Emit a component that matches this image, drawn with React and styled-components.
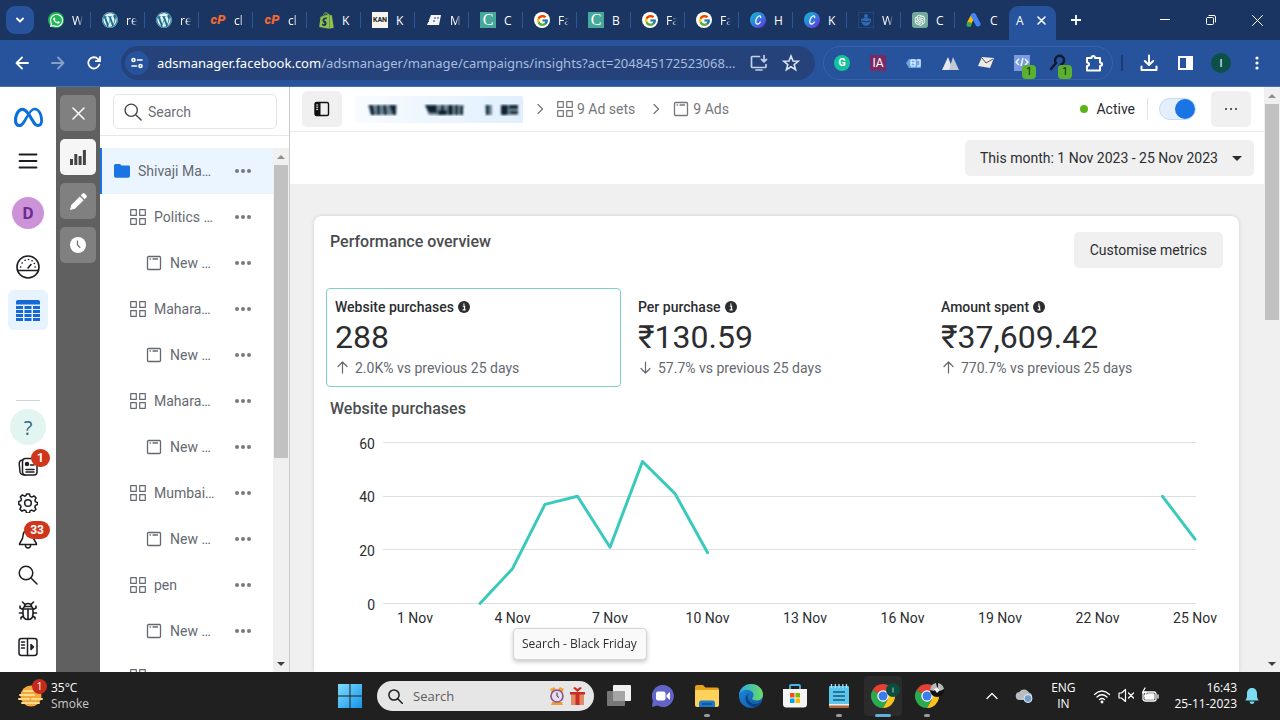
import React, { useState } from "react";
import styled, { createGlobalStyle } from "styled-components";
import { FaWhatsapp, FaWordpress, FaShopify, FaMeta } from "react-icons/fa6";
import { FcGoogle } from "react-icons/fc";
import { AiOutlineOpenAI } from "react-icons/ai";

const GlobalStyle = createGlobalStyle`
  * {
    box-sizing: border-box;
  }
  body {
    margin: 0;
    overflow: hidden;
    font-family: Roboto, "Liberation Sans", sans-serif;
    font-size: 14px;
    color: #2b2d30;
  }
  button, input, select {
    font: inherit;
    color: inherit;
    margin: 0;
    padding: 0;
    border: 0;
    background: none;
  }
  svg {
    display: block;
    flex: none;
  }
`;

const Screen = styled.div`
  display: flex;
  flex-direction: column;
  height: 100vh;
`;

const uiFont = `"Open Sans", "Noto Sans", sans-serif`;

/* ---------- browser ---------- */

const TabStrip = styled.div`
  display: flex;
  flex: none;
  align-items: center;
  height: 40px;
  padding-left: 6px;
  background: #1b3562;
  color: #fff;
  font-family: ${uiFont};
  font-size: 12px;
`;

const TabSearch = styled.button`
  display: grid;
  place-items: center;
  width: 28px;
  height: 28px;
  margin-right: 3px;
  border-radius: 9px;
  background: #27529c;
`;

const Tab = styled.button`
  display: flex;
  align-items: center;
  width: 54px;
  height: 16px;
  padding-left: 11px;
  border-right: 1px solid ${(props) => (props.$last ? "transparent" : "#2d559c")};
`;

const TabTitle = styled.span`
  margin-left: 8px;
  white-space: nowrap;
  mask-image: ${(props) => (props.$fade ? "linear-gradient(90deg, #000 6px, transparent 11px)" : "none")};
`;

const ActiveTab = styled.div`
  display: flex;
  align-items: center;
  align-self: flex-end;
  justify-content: space-between;
  width: 47px;
  height: 34px;
  padding: 0 10px 6px 7px;
  border-radius: 9px 9px 0 0;
  background: #27529c;
`;

const NewTab = styled.button`
  display: grid;
  place-items: center;
  width: 40px;
  height: 28px;
`;

const WindowButtons = styled.div`
  display: flex;
  margin-left: auto;
`;

const WindowButton = styled.button`
  display: grid;
  place-items: center;
  width: 46px;
  height: 32px;
`;

const Favicon = styled.span`
  display: grid;
  flex: none;
  place-items: center;
  width: 16px;
  height: 16px;
  border-radius: ${(props) => props.$radius || 0}px;
  background: ${(props) => props.$bg || "none"};
  color: ${(props) => props.$color || "#fff"};
  font: ${(props) => props.$font || "bold 9px Roboto, sans-serif"};
  line-height: 16px;
`;

const Toolbar = styled.div`
  display: flex;
  flex: none;
  align-items: center;
  height: 47px;
  padding: 0 5px 0 4px;
  background: #27529c;
  border-bottom: 1px solid #4a6db0;
  color: #fff;
`;

const ToolButton = styled.button`
  display: grid;
  flex: none;
  place-items: center;
  width: 36px;
  height: 34px;
  opacity: ${(props) => (props.$dim ? 0.45 : 1)};
`;

const Omnibox = styled.div`
  display: flex;
  flex: 1;
  align-items: center;
  min-width: 0;
  height: 34px;
  margin: 0 8px 0 9px;
  padding: 0 8px 0 4px;
  border-radius: 17px;
  background: #25437a;
`;

const SiteInfo = styled.button`
  display: grid;
  flex: none;
  place-items: center;
  width: 24px;
  height: 24px;
  margin-right: 8px;
  border-radius: 50%;
  background: #27529c;
`;

const Address = styled.a`
  flex: 1;
  min-width: 0;
  overflow: hidden;
  color: #a9bcdf;
  font-family: "Noto Sans", sans-serif;
  font-size: 13px;
  text-decoration: none;
  text-overflow: ellipsis;
  white-space: nowrap;
`;

const Domain = styled.span`
  color: #fff;
`;

const OmniButton = styled.button`
  display: grid;
  flex: none;
  place-items: center;
  width: 32px;
  height: 28px;
`;

const Extensions = styled.div`
  display: flex;
  flex: none;
  align-items: center;
  height: 34px;
  margin-right: 8px;
  border: 1px solid #3762a9;
  border-radius: 17px;
`;

const Extension = styled(ToolButton)`
  position: relative;
`;

const ExtensionCount = styled.span`
  position: absolute;
  right: 4px;
  bottom: 1px;
  width: 14px;
  height: 14px;
  border-radius: 4px;
  background: #5cb030;
  color: #10240a;
  font-size: 10px;
  line-height: 14px;
`;

const ToolbarDivider = styled.div`
  flex: none;
  width: 2px;
  height: 16px;
  margin-right: 8px;
  background: #1d3c75;
`;

const ProfileDot = styled.span`
  display: grid;
  place-items: center;
  width: 20px;
  height: 20px;
  border-radius: 50%;
  background: #0c5149;
  font-size: 11px;
`;

/* ---------- page ---------- */

const Page = styled.div`
  display: flex;
  flex: 1;
  min-height: 0;
  background: #fff;
`;

const Rail = styled.nav`
  display: flex;
  flex: none;
  flex-direction: column;
  align-items: center;
  width: 56px;
  padding: 8px 0 7px;
  color: #1c1e21;
`;

const RailItem = styled.button`
  position: relative;
  display: grid;
  flex: none;
  place-items: center;
  width: 40px;
  height: ${(props) => props.$height || 36}px;
  border-radius: 6px;
  background: ${(props) => (props.$active ? "#e7f3ff" : "none")};
`;

const Avatar = styled.span`
  display: grid;
  place-items: center;
  width: 32px;
  height: 32px;
  border-radius: 50%;
  background: #cd93d8;
  color: #6d2c8f;
  font-size: 17px;
  font-weight: 700;
`;

const RailDivider = styled.div`
  width: 24px;
  height: 1px;
  margin: auto 0 8px;
  background: #d0d3d7;
`;

const HelpItem = styled(RailItem)`
  width: 36px;
  margin-bottom: 4px;
  border-radius: 50%;
  background: #e2f5f0;
  color: #2c6a7c;
  font-family: ${uiFont};
  font-size: 20px;
`;

const Badge = styled.span`
  position: absolute;
  top: 0;
  right: -2px;
  min-width: 18px;
  height: 18px;
  padding: 0 6px;
  border-radius: 9px;
  background: #d0361b;
  color: #fff;
  font-size: 12px;
  font-weight: 700;
  line-height: 18px;
`;

const ModeRail = styled.nav`
  display: flex;
  flex: none;
  flex-direction: column;
  align-items: center;
  gap: 8px;
  width: 44px;
  padding-top: 8px;
  background: #606060;
`;

const ModeButton = styled.button`
  display: grid;
  place-items: center;
  width: 36px;
  height: 36px;
  border-radius: 5px;
  background: ${(props) => (props.$active ? "#f6f6f6" : "#808080")};
  color: ${(props) => (props.$active ? "#444" : "#fff")};
`;

const TreePanel = styled.aside`
  display: flex;
  flex: none;
  flex-direction: column;
  width: 190px;
  border-right: 1px solid #c9cbce;
`;

const TreeHeader = styled.div`
  flex: none;
  padding: 7px 12px 6px 13px;
  border-bottom: 1px solid #e6e7e9;
`;

const SearchBox = styled.label`
  display: flex;
  align-items: center;
  gap: 6px;
  height: 35px;
  padding-left: 10px;
  border: 1px solid #e3e5e8;
  border-radius: 5px;
  color: #444;
`;

const SearchInput = styled.input`
  min-width: 0;
  flex: 1;
  outline: 0;
  &::placeholder {
    color: #6b6f75;
    opacity: 1;
  }
`;

const TreeBody = styled.div`
  display: flex;
  flex: 1;
  min-height: 0;
  margin-top: 12px;
`;

const TreeList = styled.div`
  flex: 1;
  min-width: 0;
  overflow: hidden;
`;

const TreeRow = styled.div`
  display: flex;
  align-items: center;
  height: 46px;
  padding-left: ${(props) => 12 + props.$level * 16}px;
  border-left: 2px solid ${(props) => (props.$active ? "#1b74e4" : "transparent")};
  background: ${(props) => (props.$active ? "#ebf5ff" : "none")};
  color: #65696f;
`;

const TreeLink = styled.a`
  display: flex;
  flex: 1;
  align-items: center;
  gap: 8px;
  min-width: 0;
  color: inherit;
  text-decoration: none;
  white-space: nowrap;
`;

const RowMenu = styled.button`
  display: grid;
  flex: none;
  place-items: center;
  width: 60px;
  color: #77797d;
`;

const Scrollbar = styled.div`
  display: flex;
  flex: none;
  flex-direction: column;
  align-items: center;
  width: 16px;
  background: #f0f0f0;
`;

const ScrollArrow = styled.span`
  display: grid;
  flex: none;
  place-items: center;
  width: 16px;
  height: 17px;
  margin-top: ${(props) => (props.$end ? "auto" : 0)};
  color: ${(props) => (props.$end ? "#404040" : "#8f8f8f")};
`;

const ScrollThumb = styled.div`
  flex: 0 0 ${(props) => props.$share}%;
  width: 14px;
  background: #c1c1c1;
`;

const Main = styled.main`
  display: flex;
  flex: 1;
  min-width: 0;
`;

const MainColumn = styled.div`
  display: flex;
  flex: 1;
  flex-direction: column;
  min-width: 0;
  background: #f0f0f0;
`;

const CrumbBar = styled.header`
  display: flex;
  flex: none;
  align-items: center;
  height: 45px;
  padding: 0 13px 0 12px;
  border-bottom: 1px solid #e8e9eb;
  background: #fff;
`;

const GreyButton = styled.button`
  display: grid;
  place-items: center;
  height: 36px;
  padding: 0 ${(props) => props.$pad || 12}px;
  border-radius: 5px;
  background: #f0f0f0;
`;

const Crumb = styled.a`
  display: flex;
  align-items: center;
  gap: 4px;
  margin-right: 4px;
  color: #75777b;
  text-decoration: none;
`;

const CrumbArrow = styled.span`
  display: grid;
  place-items: center;
  width: 34px;
  color: #75777b;
`;

const Redacted = styled.span`
  margin-left: 13px;
`;

const Status = styled.div`
  display: flex;
  align-items: center;
  gap: 8px;
  height: 22px;
  margin-left: auto;
  padding-right: 12px;
  border-right: 1px solid #e0e2e5;
`;

const StatusDot = styled.span`
  width: 8px;
  height: 8px;
  border-radius: 50%;
  background: #5eb31a;
`;

const Toggle = styled.input`
  appearance: none;
  display: flex;
  align-items: center;
  justify-content: flex-end;
  width: 37px;
  height: 22px;
  margin: 0 15px 0 11px;
  border: 1px solid #c5dcf8;
  border-radius: 11px;
  background: #e4effc;
  &:not(:checked) {
    justify-content: flex-start;
  }
  &::before {
    content: "";
    width: 20px;
    height: 20px;
    border-radius: 50%;
    background: #1b74e4;
  }
`;

const DateBar = styled.div`
  display: flex;
  flex: none;
  justify-content: flex-end;
  height: 52px;
  padding: 8px 10px 8px 0;
  background: #fff;
`;

const DateField = styled.label`
  display: flex;
  align-items: center;
  height: 36px;
  padding-right: 12px;
  border-radius: 5px;
  background: #f0f0f0;
`;

const DateSelect = styled.select`
  appearance: none;
  height: 36px;
  padding: 0 14px 0 15px;
`;

const Card = styled.section`
  display: flex;
  flex: 1;
  flex-direction: column;
  min-height: 0;
  margin: 32px 25px 0 24px;
  border-radius: 8px 8px 0 0;
  background: #fff;
  box-shadow: 0 0 4px rgba(0, 0, 0, 0.14);
`;

const CardHeader = styled.div`
  display: flex;
  flex: none;
  align-items: flex-start;
  justify-content: space-between;
  height: 72px;
  padding: 16px 16px 0;
`;

const Title = styled.h2`
  margin: 0;
  color: #4a4c50;
  font-size: 16px;
  font-weight: 500;
  line-height: 20px;
`;

const Metrics = styled.div`
  display: grid;
  flex: none;
  grid-template-columns: repeat(3, 1fr);
  gap: 8px;
  margin: 0 12px 12px;
`;

const MetricBox = styled.button`
  height: 99px;
  padding: 0 8px;
  border: 1px solid ${(props) => (props.$active ? "#7cd0c9" : "transparent")};
  border-radius: 4px;
  text-align: left;
`;

const MetricName = styled.div`
  display: flex;
  align-items: center;
  gap: 4px;
  font-weight: 500;
  line-height: 20px;
`;

const MetricValue = styled.div`
  font-size: 32px;
  line-height: 40px;
`;

const MetricTrend = styled.div`
  display: flex;
  align-items: center;
  gap: 6px;
  padding-left: 1px;
  color: #65696f;
  line-height: 22px;
`;

const ChartHeading = styled(Title)`
  padding-left: 16px;
`;

const ChartArea = styled.div`
  flex: 1;
  min-height: 0;
  overflow: hidden;
`;

const HoverTip = styled.div`
  position: fixed;
  left: 513px;
  bottom: 60px;
  padding: 0 9px 0 8px;
  border: 1px solid #d6d6d6;
  border-radius: 4px;
  background: #f9f9f9;
  box-shadow: 0 2px 4px rgba(0, 0, 0, 0.22);
  font-family: ${uiFont};
  font-size: 12px;
  line-height: 30px;
`;

/* ---------- taskbar ---------- */

const Taskbar = styled.footer`
  display: flex;
  flex: none;
  height: 48px;
  background: #202020;
  color: #fff;
  font-family: ${uiFont};
  font-size: 12px;
  line-height: 16px;
`;

const Weather = styled.button`
  display: flex;
  flex: 1;
  align-items: center;
  gap: 5px;
  padding-left: 18px;
  text-align: left;
`;

const WeatherIcon = styled.span`
  position: relative;
`;

const WeatherBadge = styled.span`
  position: absolute;
  top: -4px;
  right: -1px;
  width: 15px;
  height: 15px;
  border-radius: 50%;
  background: #c42b1c;
  font-size: 10px;
  line-height: 15px;
  text-align: center;
`;

const Faint = styled.div`
  color: #c8c8c8;
`;

const AppGroup = styled.div`
  display: flex;
  align-items: center;
`;

const AppButton = styled.button`
  position: relative;
  display: grid;
  place-items: center;
  width: 44px;
  height: 48px;
`;

const AppFrame = styled.span`
  display: grid;
  place-items: center;
  width: 38px;
  height: 40px;
  border-radius: 4px;
  background: ${(props) => (props.$active ? "#2b2b2b" : "none")};
`;

const RunningMark = styled.span`
  position: absolute;
  bottom: 3px;
  width: ${(props) => (props.$active ? 16 : 6)}px;
  height: 3px;
  border-radius: 2px;
  background: ${(props) => (props.$active ? "#60b0dc" : "#9a9a9a")};
`;

const TaskSearch = styled.label`
  display: flex;
  align-items: center;
  gap: 10px;
  width: 217px;
  height: 30px;
  margin: 0 3px 0 5px;
  padding: 0 9px 0 11px;
  border-radius: 15px;
  background: #e6e6e6;
  color: #202020;
  font-size: 13px;
`;

const TaskSearchInput = styled(SearchInput)`
  &::placeholder {
    color: #5c5c5c;
  }
`;

const Tray = styled.div`
  display: flex;
  flex: 1;
  align-items: center;
  justify-content: flex-end;
  padding-right: 21px;
`;

const CloudButton = styled.button`
  width: 36px;
  margin-left: 9px;
`;

const Language = styled.button`
  width: 32px;
  margin: 0 14px 0 4px;
`;

const TrayIcons = styled.div`
  display: flex;
  gap: 7px;
  margin-right: 15px;
`;

const Clock = styled.button`
  margin-right: 8px;
  text-align: right;
`;

/* ---------- icons ---------- */

const Stroke = ({ size = 20, box = 20, width = 1.5, children, ...rest }) => (
  <svg
    width={size}
    height={size}
    viewBox={`0 0 ${box} ${box}`}
    fill="none"
    stroke="currentColor"
    strokeWidth={width}
    strokeLinecap="round"
    strokeLinejoin="round"
    {...rest}
  >
    {children}
  </svg>
);

const SearchIcon = ({ size = 18, width = 1.5 }) => (
  <Stroke size={size} width={width}>
    <circle cx="8" cy="8" r="6.8" />
    <path d="M13 13l6 6" />
  </Stroke>
);

const GridIcon = () => (
  <Stroke size={16} box={16} width={1.2}>
    <path d="M.7.7h5.6v5.6H.7zM9.7.7h5.6v5.6H9.7zM.7 9.7h5.6v5.6H.7zM9.7 9.7h5.6v5.6H9.7z" />
  </Stroke>
);

const AdIcon = () => (
  <Stroke size={16} box={16} width={1.3}>
    <rect x="1.5" y="1.5" width="13" height="13" rx="1" />
    <path d="M4 4h.4M7 4h4.500" />
  </Stroke>
);

const FolderIcon = () => (
  <svg width="16" height="14" viewBox="0 0 16 14" fill="#1b74e4">
    <path d="M0 1.5Q0 0 1.5 0h4Q7 0 7.3 1.6L14.5 1.6Q16 1.6 16 3v9q0 1.8-1.8 1.8H1.8Q0 13.8 0 12z" />
  </svg>
);

const CrumbChevron = () => (
  <Stroke size={10} box={10} width={1.3}>
    <path d="M3 .5L7.5 5 3 9.5" />
  </Stroke>
);

const Dots = ({ r = 2, gap = 6 }) => (
  <svg width={gap * 2 + r * 2} height={r * 2} fill="currentColor">
    {[0, 1, 2].map((i) => (
      <circle key={i} cx={r + gap * i} cy={r} r={r} />
    ))}
  </svg>
);

const Triangle = ({ up, size = 8 }) => (
  <svg width={size} height={size / 2} viewBox="0 0 8 4" fill="currentColor">
    <path d={up ? "M0 4l4-4 4 4z" : "M0 0h8L4 4z"} />
  </svg>
);

const InfoIcon = () => (
  <svg width="12" height="12" viewBox="0 0 12 12">
    <circle cx="6" cy="6" r="6" fill="#2b2d30" />
    <path d="M4.8 5.2h1.7v3.6M4.6 8.9h3M5.9 2.6v1.1" stroke="#fff" strokeWidth="1.3" fill="none" />
  </svg>
);

const CanvaIcon = () => (
  <svg width="16" height="16" viewBox="0 0 16 16">
    <defs>
      <linearGradient id="canva" x1="0" y1="0" x2="1" y2="1">
        <stop offset="0" stopColor="#0fc3cf" />
        <stop offset="0.5" stopColor="#2f7de0" />
        <stop offset="1" stopColor="#7a26dd" />
      </linearGradient>
    </defs>
    <circle cx="8" cy="8" r="8" fill="url(#canva)" />
    <path
      d="M10.6 5.6c.4-1.4-.7-2.2-2.1-1.4-2.2 1.2-3.6 5.5-2.3 7.1 1.1 1.4 3.2.4 4.1-1.3"
      fill="none"
      stroke="#fff"
      strokeWidth="1.3"
      strokeLinecap="round"
    />
  </svg>
);

const Chrome = ({ children }) => (
  <svg width="34" height="26" viewBox="-5 0 34 26">
    <g transform="translate(12 13)">
      <path d="M0 0L-10.4-6A12 12 0 0 1 10.4-6z" fill="#e34133" />
      <path d="M-10.4-6A12 12 0 0 0 0 12L5.2 3 0 0z" fill="#2da94f" />
      <path d="M10.4-6A12 12 0 0 1 0 12L5.2 3 3-6z" fill="#fcc31e" />
      <circle r="5.7" fill="#fff" />
      <circle r="4.5" fill="#3b7ded" />
    </g>
    {children}
  </svg>
);

const Panel = () => (
  <svg width="16" height="16" viewBox="0 0 16 16">
    <rect x="1" y="1.5" width="13.5" height="13" rx="1.5" fill="none" stroke="#111" strokeWidth="1.4" />
    <path d="M1 1.5h5.5v13H1z" fill="#111" />
    <path d="M2.2 4h2M2.2 6.2h2M2.2 8.4h2" stroke="#fff" />
  </svg>
);

const RedactedName = () => (
  <svg width="168" height="30" viewBox="0 0 168 30">
    <defs>
      <filter id="smudge">
        <feGaussianBlur stdDeviation="0.8" />
      </filter>
      <linearGradient id="smudgeBack">
        <stop offset="0" stopColor="#f8fcff" />
        <stop offset="1" stopColor="#e0effd" />
      </linearGradient>
    </defs>
    <rect width="168" height="27" rx="2" y="2" fill="url(#smudgeBack)" />
    <g filter="url(#smudge)">
      <path d="M13 11h29l-1 10H16zM70 11h39l-2 10H74zM130 11h7v10h-6zM146 11h17v10h-17z" fill="#6d8699" />
      <path
        d="M14 11h4l2 10h-4zM22 11h3v10h-3zM28 11h3l1 10h-3zM34 11h7v10h-3zM70 11h12v8h-8zM83 16h9v5h-9zM86 11h3v6h-3zM93 11h5v10h-5zM100 11h3v10h-3zM105 12h3v9h-3zM131 11h3v10h-3zM146 11h7v10h-7zM154 11h9v4h-9zM155 17h8v3h-8z"
        fill="#0b2130"
      />
    </g>
  </svg>
);

const wordpress = { $bg: "#16708f", $radius: 8, $color: "#e3f1f6" };
const cpanel = { $color: "#f26833", $font: "italic 900 13px Roboto, sans-serif" };
const google = { $bg: "#fff", $radius: 8 };
const teal = { $bg: "#46a89b", $font: "16px 'Liberation Serif', serif" };

const tabs = [
  ["W", <FaWhatsapp size={15} />, { $bg: "#21b657", $radius: 8 }],
  ["re", <FaWordpress size={16} />, wordpress],
  ["re", <FaWordpress size={16} />, wordpress],
  ["cl", "cP", cpanel],
  ["cl", "cP", cpanel],
  ["K", <FaShopify size={17} />, { $color: "#8fc04a" }],
  ["K", "KAN", { $bg: "#f5f5ee", $color: "#222", $font: "bold 7px Roboto, sans-serif" }],
  [
    "M",
    <svg width="16" height="12" viewBox="0 0 16 12">
      <path d="M1 11L5 1h10l-2 10z" fill="#f4f6fa" />
      <path d="M0 10l3-3M8 4h2M11 4h2M7 7h2" stroke="#26406e" />
    </svg>,
  ],
  ["C", "C", teal],
  ["Fa", <FcGoogle size={13} />, google],
  ["B", "C", teal],
  ["Fa", <FcGoogle size={13} />, google],
  ["Fa", <FcGoogle size={13} />, google],
  ["H", <CanvaIcon />],
  ["K", <CanvaIcon />],
  [
    "W",
    <svg width="16" height="16" viewBox="0 0 16 16">
      <rect x=".5" y=".5" width="15" height="15" fill="none" stroke="#28569c" strokeDasharray="1 1" />
      <circle cx="8" cy="4" r="2" fill="#2f6cb5" />
      <path d="M3 7q5-2 10 0 0 6-5 7-5-1-5-7z" fill="#2f6cb5" />
      <path d="M4 9q4 2 8 0" stroke="#173463" fill="none" />
    </svg>,
  ],
  ["C", <AiOutlineOpenAI size={14} />, { $bg: "#74aa9c", $radius: 3 }],
  [
    "C",
    <svg width="16" height="16" viewBox="0 0 16 16">
      <path d="M7.5 3L3 11.5" stroke="#fbbc04" strokeWidth="4.5" />
      <path d="M7.5 3.5l4.5 8.5" stroke="#4285f4" strokeWidth="5" strokeLinecap="round" />
      <circle cx="3" cy="12.5" r="2.5" fill="#34a853" />
    </svg>,
  ],
];

const tree = [
  { level: 0, name: "Shivaji Ma…", active: true },
  { level: 1, name: "Politics …" },
  { level: 2, name: "New …" },
  { level: 1, name: "Mahara…" },
  { level: 2, name: "New …" },
  { level: 1, name: "Mahara…" },
  { level: 2, name: "New …" },
  { level: 1, name: "Mumbai…" },
  { level: 2, name: "New …" },
  { level: 1, name: "pen" },
  { level: 2, name: "New …" },
  { level: 1, name: "" },
];

const treeIcons = [FolderIcon, GridIcon, AdIcon];

const metrics = [
  { name: "Website purchases", value: "288", trend: "2.0K% vs previous 25 days", up: true },
  { name: "Per purchase", value: "₹130.59", trend: "57.7% vs previous 25 days" },
  { name: "Amount spent", value: "₹37,609.42", trend: "770.7% vs previous 25 days", up: true },
];

// [day of November, purchases]
const series = [
  [[3, 0], [4, 13], [5, 37], [6, 40], [7, 21], [8, 53], [9, 41], [10, 19]],
  [[24, 40], [25, 24]],
];

const dayX = (day) => 101 + (day - 1) * 32.5;
const valueY = (value) => 184.5 - value * 2.68;

const Chart = () => (
  <svg width="100%" viewBox="0 0 925 210" fontFamily="Roboto, sans-serif" fontSize="14" fill="#2b2d30">
    {[0, 20, 40, 60].map((value) => (
      <g key={value}>
        <path d={`M69 ${Math.floor(valueY(value)) + 0.5}H882`} stroke="#dcdee1" />
        <text x="61" y={valueY(value) + 6} textAnchor="end">
          {value}
        </text>
      </g>
    ))}
    {[1, 4, 7, 10, 13, 16, 19, 22, 25].map((day) => (
      <text key={day} x={dayX(day)} y="204" textAnchor="middle">
        {day} Nov
      </text>
    ))}
    {series.map((points, i) => (
      <polyline
        key={i}
        points={points.map(([day, value]) => `${dayX(day)},${valueY(value)}`).join(" ")}
        fill="none"
        stroke="#3acabb"
        strokeWidth="3"
        strokeLinecap="round"
        strokeLinejoin="round"
      />
    ))}
  </svg>
);

const Browser = () => (
  <>
    <TabStrip>
      <TabSearch aria-label="Search tabs">
        <Stroke size={8} box={8} width={1.8}>
          <path d="M1 2.5l3 3 3-3" />
        </Stroke>
      </TabSearch>
      {tabs.map(([title, icon, look], i) => (
        <Tab key={i} $last={i === tabs.length - 1}>
          <Favicon {...look}>{icon}</Favicon>
          <TabTitle $fade={title.length > 1 || title === "W" || title === "M"}>{title}</TabTitle>
        </Tab>
      ))}
      <ActiveTab>
        A
        <button aria-label="Close tab">
          <Stroke size={9} box={9} width={1.6}>
            <path d="M1 1l7 7M8 1l-7 7" />
          </Stroke>
        </button>
      </ActiveTab>
      <NewTab aria-label="New tab">
        <Stroke size={10} box={10} width={1.8}>
          <path d="M5 0v10M0 5h10" />
        </Stroke>
      </NewTab>
      <WindowButtons>
        <WindowButton aria-label="Minimise">
          <Stroke size={10} box={10} width={1}>
            <path d="M0 4.5h10" />
          </Stroke>
        </WindowButton>
        <WindowButton aria-label="Restore">
          <Stroke size={10} box={10} width={1}>
            <rect x=".5" y="2.5" width="7" height="7" rx="1" />
            <path d="M3 .5h5q1.5 0 1.5 1.5v5" />
          </Stroke>
        </WindowButton>
        <WindowButton aria-label="Close">
          <Stroke size={11} box={11} width={1}>
            <path d="M.5.5l10 10M10.5.5l-10 10" />
          </Stroke>
        </WindowButton>
      </WindowButtons>
    </TabStrip>
    <Toolbar>
      <ToolButton aria-label="Back">
        <Stroke size={14} box={14} width={1.8}>
          <path d="M13 7H1.5M7 1.5L1.5 7 7 12.5" />
        </Stroke>
      </ToolButton>
      <ToolButton aria-label="Forward" $dim>
        <Stroke size={14} box={14} width={1.8}>
          <path d="M1 7h11.5M7 1.5L12.5 7 7 12.5" />
        </Stroke>
      </ToolButton>
      <ToolButton aria-label="Reload">
        <Stroke size={14} box={14} width={1.8}>
          <path d="M12.3 8.5A5.6 5.6 0 1 1 11 3l1.8 1.8M13 1v4.2H8.8" />
        </Stroke>
      </ToolButton>
      <Omnibox>
        <SiteInfo aria-label="Site information">
          <Stroke size={12} box={12} width={1.6}>
            <circle cx="2.5" cy="3" r="1.5" />
            <path d="M6.5 3H11M1 9h4.5" />
            <circle cx="9.5" cy="9" r="1.5" />
          </Stroke>
        </SiteInfo>
        <Address href="#address">
          <Domain>adsmanager.facebook.com</Domain>
          /adsmanager/manage/campaigns/insights?act=204845172523068...
        </Address>
        <OmniButton aria-label="Install">
          <Stroke size={18} box={18} width={1.7} stroke="#c3d0e8">
            <path d="M9.5 2.5h-7q-1 0-1 1v9q0 1 1 1H15q1 0 1-1v-2M6 16h6M14 1.5v6M11.5 5.3L14 7.8l2.5-2.500" />
          </Stroke>
        </OmniButton>
        <OmniButton aria-label="Bookmark">
          <Stroke size={18} box={18} width={1.6} stroke="#dbe4f4" strokeLinejoin="miter">
            <path d="M9 2l2 5 5.2.3-4 3.3 1.4 5.1L9 12.8l-4.6 2.9 1.4-5.1-4-3.3L7 7z" />
          </Stroke>
        </OmniButton>
      </Omnibox>
      <Extensions>
        <ToolButton aria-label="Grammarly">
          <Favicon $bg="#15c39a" $radius={8} $font="bold 11px Roboto, sans-serif">
            G
          </Favicon>
        </ToolButton>
        <ToolButton aria-label="IA">
          <Favicon $bg="#7a2a63" $font="12px Roboto, sans-serif">
            IA
          </Favicon>
        </ToolButton>
        <ToolButton aria-label="Bulk">
          <svg width="16" height="14" viewBox="0 0 16 14">
            <path d="M0 7l3-4h12v9H3z" fill="#6aa5ec" />
            <path d="M5 4h4v6H5zM11 4h3v6h-3M5 7h4" fill="none" stroke="#fff" />
          </svg>
        </ToolButton>
        <ToolButton aria-label="Peaks">
          <svg width="17" height="14" viewBox="0 0 17 14">
            <path d="M0 14L6 1l5 13z" fill="#e6e9ee" />
            <path d="M7 14l4-13 6 13z" fill="#c3c8d2" />
          </svg>
        </ToolButton>
        <ToolButton aria-label="Mail">
          <svg width="16" height="14" viewBox="0 0 16 14">
            <path d="M4 1l12 1-4 10-12-2z" fill="#eeeae4" />
            <path d="M4 2l4 5 7-4" fill="none" stroke="#555" />
          </svg>
        </ToolButton>
        <Extension aria-label="Code">
          <svg width="16" height="16" viewBox="0 0 16 16">
            <rect width="16" height="16" fill="#7a9be0" />
            <path d="M5 4L2 7l3 3M11 4l3 3-3 3M9 3l-2 8" fill="none" stroke="#fff" strokeWidth="1.3" />
          </svg>
          <ExtensionCount>1</ExtensionCount>
        </Extension>
        <Extension aria-label="Inspector">
          <Stroke size={18} box={18} width={2.4} stroke="#10182b">
            <path d="M7 9a4.5 4.5 0 1 1 5 1.5M7 9l-5 6" />
          </Stroke>
          <ExtensionCount>1</ExtensionCount>
        </Extension>
        <ToolButton aria-label="Extensions">
          <Stroke size={18} box={18} width={2}>
            <path d="M2 4h4.5q0-2 1.700-2T10 4h5v4.500q2 0 2 1.700T15 12v4.500H2V12q2 0 2-1.700T2 8.500z" />
          </Stroke>
        </ToolButton>
      </Extensions>
      <ToolbarDivider />
      <ToolButton aria-label="Downloads">
        <Stroke size={18} box={18} width={2}>
          <path d="M9 1.5v9M4.8 7L9 11l4.2-4M1.5 12.5V16h15v-3.500" />
        </Stroke>
      </ToolButton>
      <ToolButton aria-label="Side panel">
        <svg width="15" height="14" viewBox="0 0 15 14">
          <rect x="1" y="1" width="13" height="12" fill="none" stroke="#fff" strokeWidth="2" />
          <path d="M8 1h6v12H8z" fill="#fff" />
        </svg>
      </ToolButton>
      <ToolButton aria-label="Profile">
        <ProfileDot>I</ProfileDot>
      </ToolButton>
      <ToolButton aria-label="Menu">
        <svg width="4" height="14" fill="#fff">
          <circle cx="2" cy="2" r="1.6" />
          <circle cx="2" cy="7" r="1.6" />
          <circle cx="2" cy="12" r="1.6" />
        </svg>
      </ToolButton>
    </Toolbar>
  </>
);

const SideRail = () => (
  <Rail>
    <RailItem $height={44} aria-label="Meta">
      <FaMeta size={29} color="#0a6fd8" />
    </RailItem>
    <RailItem $height={44} aria-label="Menu">
      <Stroke width={1.8}>
        <path d="M1.5 3.5h17M1.5 10h17M1.5 16.5h17" />
      </Stroke>
    </RailItem>
    <RailItem $height={60} aria-label="Account">
      <Avatar>D</Avatar>
    </RailItem>
    <RailItem $height={47} aria-label="Overview">
      <Stroke size={24} box={24} width={1.6}>
        <circle cx="12" cy="12" r="11" />
        <path d="M1.5 15.5h21M12 13l3-3.500" />
        <path d="M4.5 12h.2M6 8h.2M9 5.2h.2M12.5 4.5h.2M16 5.8h.2M19 12h.2M18.3 8.5h.2" />
      </Stroke>
    </RailItem>
    <RailItem $height={40} $active aria-label="Campaigns">
      <svg width="24" height="21" viewBox="0 0 24 21" fill="#1668d6">
        <path d="M0 2q0-2 2-2h20q2 0 2 2v2.5H0z" />
        {[6, 10, 14, 18].map((y) => (
          <path key={y} d={`M0 ${y}h7v3H0zM8.5 ${y}h7v3h-7zM17 ${y}h7v3h-7z`} />
        ))}
      </svg>
    </RailItem>
    <RailDivider />
    <HelpItem aria-label="Help">?</HelpItem>
    <RailItem aria-label="News">
      <Stroke width={1.5}>
        <rect x="4.5" y="1.5" width="14.5" height="16.5" rx="3" />
        <path d="M4.5 3Q1 3.5 1.2 7l.8 8q.5 3 5 3M8 12.5h8M8 15h8M12.5 8H16" />
        <circle cx="9" cy="7" r="1.5" fill="currentColor" />
      </Stroke>
      <Badge>1</Badge>
    </RailItem>
    <RailItem aria-label="Settings">
      <Stroke width={1.5}>
        <circle cx="10" cy="10" r="3.3" />
        <path d="M8.5 1h3l.6 2.4 1.7.7 2.2-1.2 2.1 2.1-1.2 2.2.7 1.700 1.900.6v2l-2 .9-.7 1.700 1.200 2.200-2 2-2.200-1.200-1.700.7-.6 2.200h-3l-.6-2.300-1.700-.7-2.200 1.200-2.100-2.100 1.200-2.200-.7-1.700L.8 11.500v-3l2-.6.7-1.700L2.300 4 4.400 1.900l2.200 1.300 1.400-.6z" />
      </Stroke>
    </RailItem>
    <RailItem aria-label="Notifications">
      <Stroke width={1.5}>
        <path d="M10 1.5c-3.500 0-5 2.5-5 5.5 0 4-3.500 6-3.500 8.500h17C18.500 13 15 11 15 7c0-3-1.500-5.500-5-5.500zM7.300 16q.3 3 2.700 3t2.700-3" />
      </Stroke>
      <Badge>33</Badge>
    </RailItem>
    <RailItem aria-label="Search">
      <SearchIcon size={20} />
    </RailItem>
    <RailItem aria-label="Report a problem">
      <Stroke width={1.6}>
        <path d="M5 9q0-3 2-3.500h6q2 .5 2 3.500v4q0 5.500-5 5.500T5 13zM5 8h10M10 8v10M6.500 5Q7 2.500 10 2.500T13.500 5M6.500 3L4.500 1M13.500 3l2-2M5 8.500L2 7V5M15 8.500L18 7V5M5 12H1.500M15 12h3.500M5.500 15L3 16.500V18M14.500 15l2.500 1.500V18" />
      </Stroke>
    </RailItem>
    <RailItem aria-label="Collapse">
      <Stroke width={1.5}>
        <rect x="1" y="1.5" width="18" height="17" rx="2.5" />
        <path d="M9.5 1.5v17M3.5 5h3M3.5 8h3M3.5 11h3" />
        <path d="M13 7.5v5l2.5-2.500z" fill="currentColor" />
      </Stroke>
    </RailItem>
  </Rail>
);

const ModeSwitcher = () => (
  <ModeRail>
    <ModeButton aria-label="Close">
      <Stroke size={13} box={13}>
        <path d="M1 1l11 11M12 1L1 12" />
      </Stroke>
    </ModeButton>
    <ModeButton $active aria-label="Charts">
      <svg width="16" height="15" viewBox="0 0 16 15" fill="currentColor">
        <path d="M0 9h3v6H0zM4.3 4h3v11h-3zM8.6 6h3v9h-3zM12.9 0h3v15h-3z" />
      </svg>
    </ModeButton>
    <ModeButton aria-label="Edit">
      <svg width="17" height="17" viewBox="0 0 17 17" fill="currentColor">
        <path d="M0 17l1.2-5L9.800 3.400l3.800 3.800L5 15.800zM10.800 2.400L12.600.6q1-1 2.200.1l1.500 1.500q1.100 1.200.1 2.200l-1.800 1.800z" />
      </svg>
    </ModeButton>
    <ModeButton aria-label="History">
      <svg width="16" height="16" viewBox="0 0 16 16">
        <circle cx="8" cy="8" r="8" fill="#fff" />
        <path d="M7.5 3.5V8l2.800 2.800" fill="none" stroke="#777" strokeWidth="1.4" />
      </svg>
    </ModeButton>
  </ModeRail>
);

const CampaignTree = () => (
  <TreePanel>
    <TreeHeader>
      <SearchBox>
        <SearchIcon />
        <SearchInput placeholder="Search" aria-label="Search campaigns" />
      </SearchBox>
    </TreeHeader>
    <TreeBody>
      <TreeList>
        {tree.map(({ level, name, active }, i) => {
          const Icon = treeIcons[level];
          return (
            <TreeRow key={i} $level={level} $active={active}>
              <TreeLink href="#item">
                <Icon />
                {name}
              </TreeLink>
              <RowMenu aria-label="More">
                <Dots />
              </RowMenu>
            </TreeRow>
          );
        })}
      </TreeList>
      <Scrollbar>
        <ScrollArrow>
          <Triangle up />
        </ScrollArrow>
        <ScrollThumb $share={56} />
        <ScrollArrow $end>
          <Triangle />
        </ScrollArrow>
      </Scrollbar>
    </TreeBody>
  </TreePanel>
);

const Insights = () => {
  const [active, setActive] = useState(true);
  const [selected, setSelected] = useState(0);
  return (
    <Main>
      <MainColumn>
        <CrumbBar>
          <GreyButton aria-label="Toggle panel">
            <Panel />
          </GreyButton>
          <Redacted>
            <RedactedName />
          </Redacted>
          <CrumbArrow>
            <CrumbChevron />
          </CrumbArrow>
          <Crumb href="#adsets">
            <GridIcon />9 Ad sets
          </Crumb>
          <CrumbArrow>
            <CrumbChevron />
          </CrumbArrow>
          <Crumb href="#ads">
            <AdIcon />9 Ads
          </Crumb>
          <Status>
            <StatusDot />
            Active
          </Status>
          <Toggle
            type="checkbox"
            aria-label="Active"
            checked={active}
            onChange={() => setActive(!active)}
          />
          <GreyButton $pad={14} aria-label="More">
            <Dots r={1} gap={5} />
          </GreyButton>
        </CrumbBar>
        <DateBar>
          <DateField>
            <DateSelect aria-label="Date range">
              <option>This month: 1 Nov 2023 - 25 Nov 2023</option>
            </DateSelect>
            <Triangle size={10} />
          </DateField>
        </DateBar>
        <Card>
          <CardHeader>
            <Title>Performance overview</Title>
            <GreyButton $pad={16}>Customise metrics</GreyButton>
          </CardHeader>
          <Metrics>
            {metrics.map(({ name, value, trend, up }, i) => (
              <MetricBox key={name} $active={selected === i} onClick={() => setSelected(i)}>
                <MetricName>
                  {name}
                  <InfoIcon />
                </MetricName>
                <MetricValue>{value}</MetricValue>
                <MetricTrend>
                  <Stroke size={13} box={13} width={1.2}>
                    <path d={up ? "M6.5 12V1M2 5.5L6.5 1 11 5.5" : "M6.5 1v11M2 7.5L6.5 12 11 7.5"} />
                  </Stroke>
                  {trend}
                </MetricTrend>
              </MetricBox>
            ))}
          </Metrics>
          <ChartHeading>Website purchases</ChartHeading>
          <ChartArea>
            <Chart />
          </ChartArea>
        </Card>
      </MainColumn>
      <Scrollbar>
        <ScrollArrow>
          <Triangle up />
        </ScrollArrow>
        <ScrollThumb $share={37} />
        <ScrollArrow $end>
          <Triangle />
        </ScrollArrow>
      </Scrollbar>
    </Main>
  );
};

const apps = [
  {
    name: "Task view",
    icon: (
      <svg width="24" height="22" viewBox="0 0 24 22">
        <rect x="6" width="18" height="16" rx="1" fill="#f1f1f1" />
        <rect y="6" width="18" height="15" rx="1" fill="#777" />
        <rect x="6" y="6" width="12" height="10" fill="#a5a5a5" />
      </svg>
    ),
  },
  {
    name: "Chat",
    icon: (
      <svg width="22" height="22" viewBox="0 0 22 22">
        <path d="M11 0a11 11 0 1 1-5.5 20.600L0 22l.8-6.500A11 11 0 0 1 11 0z" fill="#6264c7" />
        <rect x="4" y="6.5" width="9.5" height="9" rx="2" fill="#fff" />
        <path d="M14.5 10l3.500-3v8l-3.500-3z" fill="#fff" />
      </svg>
    ),
  },
  {
    name: "Files",
    running: true,
    icon: (
      <svg width="24" height="22" viewBox="0 0 24 22">
        <path d="M0 2q0-2 2-2h6l2.5 2.500H22q2 0 2 2V8H0z" fill="#e2a21c" />
        <path d="M0 6q0-1 1-1h22q1 0 1 1v14q0 2-2 2H2q-2 0-2-2z" fill="#fdd25b" />
        <path d="M4 22v-4q0-2.500 2.500-2.500h11Q20 15.500 20 18v4z" fill="#1c78c8" />
        <path d="M7 19h10" stroke="#0e4f8b" strokeWidth="1.5" />
      </svg>
    ),
  },
  {
    name: "Edge",
    icon: (
      <svg width="24" height="24" viewBox="0 0 24 24">
        <defs>
          <linearGradient id="edgeTop" x1="0" x2="1">
            <stop offset="0" stopColor="#2aa6e6" />
            <stop offset="1" stopColor="#6bdc62" />
          </linearGradient>
          <linearGradient id="edgeLow" x1="0" y1="0" x2="1" y2="1">
            <stop offset="0" stopColor="#1e8fe0" />
            <stop offset="1" stopColor="#104f9f" />
          </linearGradient>
        </defs>
        <circle cx="12" cy="12" r="12" fill="url(#edgeLow)" />
        <path
          d="M0 11C1 4 6 0 12 0c7 0 12 5 12 10.500 0 4-3 6-6.500 6-3 0-4.500-1.200-4.500-2 0-.6 1.500-1.200 1.500-3.500C14.500 8 11.500 6 8 6c-4 0-7 2-8 5z"
          fill="url(#edgeTop)"
        />
        <path
          d="M8.500 12c0 5 4 8.500 9 8 2-.2 3.500-1 5-2.500-1 2.500-3 4.500-5 5.500-6 .5-11-4-11-8.500 0-2.500 1.500-4.500 4-5-1 .5-2 1.500-2 2.500z"
          fill="#0d3f87"
        />
      </svg>
    ),
  },
  {
    name: "Store",
    icon: (
      <svg width="24" height="24" viewBox="0 0 24 24">
        <path d="M7 6V2q0-1 1-1h8q1 0 1 1v4" fill="none" stroke="#4cb3e8" strokeWidth="1.8" />
        <path d="M0 5h24v15q0 3.500-3.500 3.500h-17Q0 23.500 0 20z" fill="#f4f4f4" />
        <path d="M7 9h4.500v4.500H7z" fill="#f25022" />
        <path d="M12.500 9H17v4.500h-4.500z" fill="#7fba00" />
        <path d="M7 14.500h4.500V19H7z" fill="#00a4ef" />
        <path d="M12.500 14.500H17V19h-4.500z" fill="#ffb900" />
      </svg>
    ),
  },
  {
    name: "Notepad",
    running: true,
    icon: (
      <svg width="20" height="24" viewBox="0 0 20 24">
        <rect y="19" width="20" height="5" rx="1" fill="#b3673a" />
        <rect y="2" width="20" height="19" rx="1" fill="#5cc7ec" />
        <path d="M2.500 0v4M6.300 0v4M10 0v4M13.800 0v4M17.500 0v4" stroke="#a6e4f7" strokeWidth="1.3" />
        <path d="M4 8h12M4 12h12M4 16h12" stroke="#17587d" strokeWidth="1.5" />
        <rect y="20" width="20" height="1.5" fill="#eee" />
      </svg>
    ),
  },
  {
    name: "Chrome work",
    running: true,
    active: true,
    icon: (
      <Chrome>
        <circle cx="22" cy="7" r="7" fill="#0c4d42" />
        <path d="M22 4.500v5" stroke="#a9c9c2" />
      </Chrome>
    ),
  },
  {
    name: "Chrome home",
    running: true,
    icon: (
      <Chrome>
        <circle cx="22" cy="7" r="7" fill="#111" />
        <path d="M15 7a7 7 0 0 1 6-7l1 4-3 4zM23 0q5 1 6 6l-4 2-2-3z" fill="#b8b8b8" />
        <path d="M19 6l3-2 3 3-3 3z" fill="#eee" />
      </Chrome>
    ),
  },
];

const Desktop = () => (
  <Taskbar>
    <Weather>
      <WeatherIcon>
        <svg width="28" height="26" viewBox="0 0 28 26">
          <circle cx="13" cy="13" r="10.5" fill="#f2a93c" />
          <path
            d="M2 12h14M6 8h9M1 16h10M14 16h10M4 20h17"
            stroke="#ffd98c"
            strokeWidth="2"
            strokeLinecap="round"
          />
        </svg>
        <WeatherBadge>1</WeatherBadge>
      </WeatherIcon>
      <div>
        35°C
        <Faint>Smoke</Faint>
      </div>
    </Weather>
    <AppGroup>
      <AppButton aria-label="Start">
        <svg width="24" height="24" viewBox="0 0 24 24">
          <defs>
            <linearGradient id="start" x1="0" y1="0" x2="1" y2="1">
              <stop offset="0" stopColor="#7fdcfc" />
              <stop offset="1" stopColor="#1494ea" />
            </linearGradient>
          </defs>
          <path
            d="M0 0h11.500v11.500H0zM12.500 0H24v11.500H12.500zM0 12.500h11.500V24H0zM12.500 12.500H24V24H12.500z"
            fill="url(#start)"
          />
        </svg>
      </AppButton>
      <TaskSearch>
        <SearchIcon size={15} width={2} />
        <TaskSearchInput placeholder="Search" aria-label="Search this computer" />
        <svg width="36" height="20" viewBox="0 0 36 20">
          <path d="M1 3l4-2 2 2-4 4zM15 3l-4-2-2 2 4 4z" fill="#f0a63a" />
          <path d="M3 16l-1 3h12l-1-3z" fill="#ee9f3a" />
          <circle cx="8" cy="10" r="6" fill="#e8dcf2" stroke="#8a5486" strokeWidth="1.6" />
          <path d="M8 6.500V10l2 1.500" stroke="#333" fill="none" />
          <path d="M22 7h13v12H22z" fill="#e18a66" />
          <path d="M26.500 6h4v13h-4zM21 6h15v2.500H21zM24 2l4.500 4L33 2l-2-1-2.500 2L26 1z" fill="#c92d24" />
        </svg>
      </TaskSearch>
      {apps.map(({ name, icon, running, active }) => (
        <AppButton key={name} aria-label={name}>
          <AppFrame $active={active}>{icon}</AppFrame>
          {running && <RunningMark $active={active} />}
        </AppButton>
      ))}
    </AppGroup>
    <Tray>
      <button aria-label="Show hidden icons">
        <Stroke size={12} box={12} width={1.3}>
          <path d="M1 8.500L6 3.500l5 5" />
        </Stroke>
      </button>
      <CloudButton aria-label="Cloud backup">
        <svg width="36" height="16" viewBox="-9 0 36 16">
          <path d="M4 12a4 4 0 0 1-.5-8A5.500 5.500 0 0 1 13 4.500a4 4 0 0 1 1 7.500z" fill="#b9bcc0" />
          <circle cx="12" cy="10.5" r="4" fill="#6f9fca" stroke="#e8eef4" />
        </svg>
      </CloudButton>
      <Language>
        ENG
        <br />
        IN
      </Language>
      <TrayIcons>
        <Stroke size={18} box={18} width={1.3}>
          <path d="M1.500 7.500q7.500-7 15 0M4 10q5-4.500 10 0M6.500 12.500q2.500-2 5 0" />
          <circle cx="9" cy="15" r=".8" fill="#fff" />
        </Stroke>
        <Stroke size={16} box={16} width={1.2}>
          <path d="M1 6h2.500L7.500 2.500v12L3.500 11H1zM10.500 6l5 5M15.500 6l-5 5" />
        </Stroke>
        <Stroke size={18} box={18} width={1.3}>
          <rect x="2" y="5" width="13" height="9" rx="2" />
          <path d="M17 8v3" />
          <path d="M7 7h6v5H4V9z" fill="#fff" />
          <path d="M4 1L1.500 5.500h4L3.500 9" />
        </Stroke>
      </TrayIcons>
      <Clock>
        16:43
        <br />
        25-11-2023
      </Clock>
      <svg width="14" height="16" viewBox="0 0 14 16" fill="#7ddcf2">
        <path d="M7 0C3.500 0 2 2.500 2 5.500V9L.5 12.500h13L12 9V5.500C12 2.500 10.500 0 7 0zM4.500 13.500h5Q9 16 7 16t-2.500-2.500z" />
      </svg>
    </Tray>
  </Taskbar>
);

const App = () => {
  return (
    <Screen>
      <GlobalStyle />
      <Browser />
      <Page>
        <SideRail />
        <ModeSwitcher />
        <CampaignTree />
        <Insights />
      </Page>
      <Desktop />
      <HoverTip role="tooltip">Search - Black Friday</HoverTip>
    </Screen>
  );
};

export default App;
